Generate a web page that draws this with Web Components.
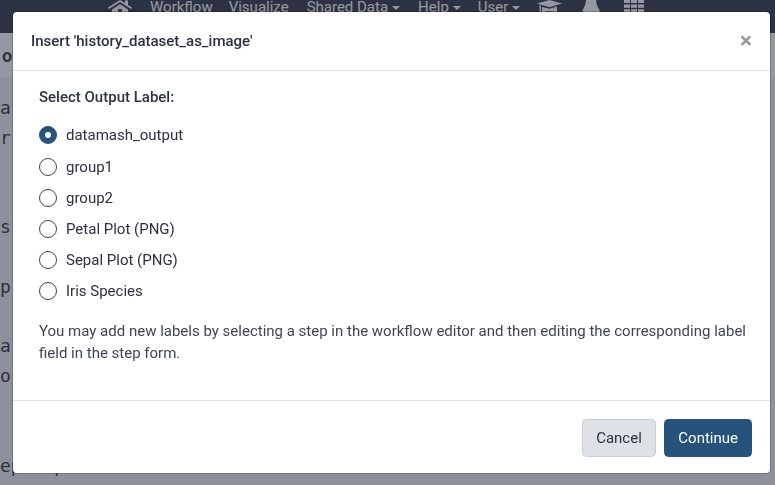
<!DOCTYPE html>
<html lang="en">
<head>
<meta charset="utf-8">
<title>Insert</title>
<style>
  html, body { margin: 0; height: 100%; overflow: hidden; }
  body { font-family: Roboto, "Liberation Sans", sans-serif; }
</style>
</head>
<body>
<galaxy-page>
  <galaxy-masthead></galaxy-masthead>
  <workflow-panel></workflow-panel>
</galaxy-page>
<modal-dialog heading="Insert 'history_dataset_as_image'">
  <radio-group label="Select Output Label:">
    <radio-option checked>datamash_output</radio-option>
    <radio-option>group1</radio-option>
    <radio-option>group2</radio-option>
    <radio-option>Petal Plot (PNG)</radio-option>
    <radio-option>Sepal Plot (PNG)</radio-option>
    <radio-option>Iris Species</radio-option>
  </radio-group>
  <p class="help">You may add new labels by selecting a step in the workflow editor and then editing the corresponding label field in the step form.</p>
  <modal-button slot="footer">Cancel</modal-button>
  <modal-button slot="footer" primary>Continue</modal-button>
</modal-dialog>

<script>
class GalaxyPage extends HTMLElement {
  constructor() {
    super();
    this.attachShadow({ mode: "open" }).innerHTML = `
<style>
  :host { display: flex; flex-direction: column; height: 485px; background: #f0f1f3; overflow: hidden; }
</style>
<slot></slot>`;
  }
}

class GalaxyMasthead extends HTMLElement {
  constructor() {
    super();
    this.attachShadow({ mode: "open" }).innerHTML = `
<style>
  :host {
    display: flex; flex: none; height: 33px; background: #2c3143; color: #fff;
    font-size: 15px; align-items: flex-start; box-sizing: border-box; padding-left: 108px;
  }
  span { line-height: 14px; white-space: nowrap; }
  svg { display: block; fill: #fff; }
  .caret { display: inline-block; margin-left: 4px; vertical-align: 2px; border: 4px solid transparent; border-top-color: #fff; border-bottom: 0; }
</style>
<svg width="24" height="13" viewBox="0 0 24 13" style="margin-right:18px"><path d="M12 0 0 7.500l1 1.500 11-7 11 7 1-1.500-4-2.500V.5h-3v2.600zM4 9.500V13h6V9h4v4h6V9.500L12 4.200z"/></svg>
<span style="margin-right:16px">Workflow</span>
<span style="margin-right:18px">Visualize</span>
<span style="margin-right:18px">Shared Data<i class="caret"></i></span>
<span style="margin-right:17px">Help<i class="caret"></i></span>
<span style="margin-right:17px">User<i class="caret"></i></span>
<svg width="25" height="13" viewBox="0 0 25 13" style="margin-right:20px"><path d="M12.500 0 0 3.500l12.500 3.800L25 3.500zM5 7v5.500c2-.8 4-1.200 7.500-1.200s5.500.4 7.500 1.200V6.500L12.500 8.800zM2.500 5v8h1.500V5.500z"/></svg>
<svg width="18" height="13" viewBox="0 0 18 13" style="margin-right:24px"><path d="M4 0h10c.4 4 1.500 7.500 3.500 10v2H.5v-2C2.500 7.500 3.600 4 4 0z"/></svg>
<svg width="20" height="13" viewBox="0 0 20 13"><path d="M0 0h6v3H0zM7 0h6v3H7zM14 0h6v3h-6zM0 4.500h6v3.200H0zM7 4.500h6v3.200H7zM14 4.500h6v3.200h-6zM0 9.300h6V13H0zM7 9.300h6V13H7zM14 9.300h6V13h-6z"/></svg>`;
  }
}

class WorkflowPanel extends HTMLElement {
  constructor() {
    super();
    this.attachShadow({ mode: "open" }).innerHTML = `
<style>
  :host { display: block; flex: 1; min-height: 0; overflow: hidden; color: #2c3143; }
  b {
    display: flex; align-items: center; height: 44px; padding-left: 2px; background: #fff;
    font: 700 18px Roboto, sans-serif;
  }
  .code { padding-top: 16px; white-space: pre; font: 18px/29.800px "DejaVu Sans Mono", monospace; }
</style>
<b>ow</b>
<div class="code">a
r


s

p

a
o


ep   p</div>`;
  }
}

class ModalDialog extends HTMLElement {
  constructor() {
    super();
    this.attachShadow({ mode: "open" }).innerHTML = `
<style>
  :host {
    position: fixed; inset: 0; display: block; background: rgba(44, 49, 67, 0.5);
    font-size: 15px; color: #2c3143;
  }
  .content {
    position: absolute; left: 12px; top: 11px; width: 759px; height: 463px;
    display: flex; flex-direction: column; box-sizing: border-box;
    background: #fff; border: 1px solid rgba(0, 0, 0, 0.2); border-radius: 4.800px;
    background-clip: padding-box;
  }
  header {
    height: 59px; flex: none; display: flex; align-items: center; justify-content: space-between;
    box-sizing: border-box; padding: 0 18px 0 18px; border-bottom: 1px solid #dee2e6; font-weight: 500;
  }
  .close { font-size: 22.500px; font-weight: 700; color: #2c3143; opacity: .5; line-height: 1; margin-top: -2px; }
  main { flex: 1; padding: 15px 16px 16px 26px; }
  footer {
    flex: none; height: 73px; box-sizing: border-box; border-top: 1px solid #dee2e6;
    display: flex; gap: 8px; justify-content: flex-end; align-items: center; padding: 1px 18px 0;
  }
  ::slotted(p) { margin: 13.200px 0 0; line-height: 22px; color: #3f4458; }
</style>
<div class="content">
  <header><span id="title"></span><span class="close">×</span></header>
  <main><slot></slot></main>
  <footer><slot name="footer"></slot></footer>
</div>`;
  }
  connectedCallback() {
    this.shadowRoot.getElementById("title").textContent = this.getAttribute("heading");
  }
}

class RadioGroup extends HTMLElement {
  constructor() {
    super();
    this.attachShadow({ mode: "open" }).innerHTML = `
<style>
  :host { display: block; }
  .label { font-weight: 500; line-height: 22px; margin-bottom: 11.800px; }
  .list { display: flex; flex-direction: column; }
</style>
<div class="label"></div>
<div class="list"><slot></slot></div>`;
  }
  connectedCallback() {
    this.shadowRoot.querySelector(".label").textContent = this.getAttribute("label");
  }
}

class RadioOption extends HTMLElement {
  constructor() {
    super();
    this.attachShadow({ mode: "open" }).innerHTML = `
<style>
  :host { display: flex; align-items: center; gap: 9px; height: 31.200px; }
  .dot {
    width: 18px; height: 18px; box-sizing: border-box; border-radius: 50%;
    border: 1px solid #3f4458; background: #fff; flex: none; display: grid; place-items: center;
  }
  :host([checked]) .dot { background: #25537b; border-color: #25537b; }
  :host([checked]) .dot::after { content: ""; width: 6px; height: 6px; border-radius: 50%; background: #fff; }
</style>
<span class="dot"></span><span><slot></slot></span>`;
  }
}

class ModalButton extends HTMLElement {
  constructor() {
    super();
    this.attachShadow({ mode: "open" }).innerHTML = `
<style>
  :host {
    display: inline-flex; align-items: center; justify-content: center;
    height: 38px; box-sizing: border-box; padding: 0 13.500px; border-radius: 4.500px;
    border: 1px solid #c8ccd4; background: #dee2e6; color: #2c3143;
  }
  :host([primary]) { padding: 0 13px; background: #25537b; border-color: #25537b; color: #fff; }
</style>
<slot></slot>`;
  }
}

customElements.define("galaxy-page", GalaxyPage);
customElements.define("galaxy-masthead", GalaxyMasthead);
customElements.define("workflow-panel", WorkflowPanel);
customElements.define("modal-dialog", ModalDialog);
customElements.define("radio-group", RadioGroup);
customElements.define("radio-option", RadioOption);
customElements.define("modal-button", ModalButton);
</script>
</body>
</html>
